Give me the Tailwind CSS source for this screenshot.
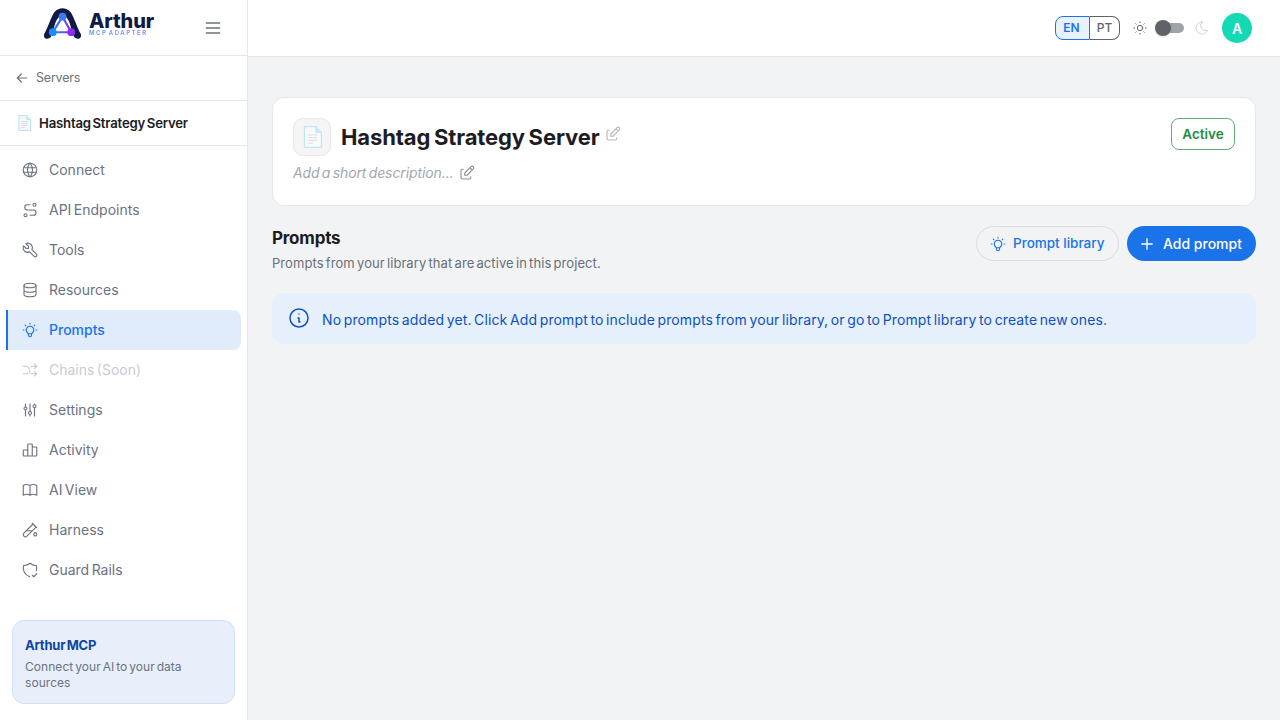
<!DOCTYPE html>
<html lang="en">
<head>
    <meta charset="UTF-8">
    <meta name="viewport" content="width=device-width, initial-scale=1.0">
    <title>Hashtag Strategy Server</title>
    <script src="https://cdn.jsdelivr.net/npm/@tailwindcss/browser@4"></script>
</head>
<body class="h-[720px] w-[1280px] overflow-hidden flex bg-[#f1f3f5] font-['Inter',sans-serif] [word-spacing:-1.5px]">
    <!-- Sidebar -->
    <aside class="w-[248px] h-full shrink-0 bg-white border-r border-[#e5e7eb] flex flex-col">
        <div class="h-[56px] shrink-0 border-b border-[#e5e7eb] flex items-center pl-[43px] pr-[24px] justify-between">
            <div class="flex items-center gap-[7px] -mt-[8px]">
                <svg class="w-[39px] h-[33px]" viewBox="0 0 40 34">
                    <defs>
                        <linearGradient id="tri" x1="0" y1="0" x2="1" y2="0"><stop offset="0" stop-color="#1a8cff"/><stop offset="1" stop-color="#8b2cf5"/></linearGradient>
                    </defs>
                    <path d="M1 28 C5 22 8 10 12 5 C16 0 24 0 28 5 C32 10 35 22 39 28 C40 33 35 34 32 31 L30 26 C28 18 26 9 20 9 C14 9 12 18 10 26 L8 31 C5 34 0 33 1 28Z" fill="#101a45"/>
                    <path d="M20 10 L29 26 H10 Z" fill="#fff" stroke="url(#tri)" stroke-width="2.200"/>
                    <circle cx="20" cy="10" r="4" fill="#3d7cf2"/>
                    <circle cx="10" cy="26" r="4" fill="#1a8cff"/>
                    <circle cx="29" cy="26" r="4" fill="#8b2cf5"/>
                </svg>
                <div class="flex flex-col leading-none">
                    <span class="text-[20px] font-extrabold text-[#101a45] tracking-[-0.1px] leading-[18px]">Arthur</span>
                    <span class="text-[6px] font-semibold tracking-[1.5px] bg-gradient-to-r from-[#3b9bff] to-[#9d6bf5] bg-clip-text text-transparent leading-[6px]">MCP ADAPTER</span>
                </div>
            </div>
            <svg class="w-[20px] h-[20px] text-[#6b7280]" viewBox="0 0 24 24" fill="none" stroke="currentColor" stroke-width="1.700" stroke-linecap="round"><path d="M4 6h16M4 12h16M4 18h16"/></svg>
        </div>
        <div class="h-[45px] shrink-0 border-b border-[#e5e7eb] flex items-center pl-[14px] gap-[6px] text-[12.500px] tracking-[-0.2px] text-[#6b7280]">
            <svg class="w-[16px] h-[16px]" viewBox="0 0 24 24" fill="none" stroke="currentColor" stroke-width="1.800" stroke-linecap="round" stroke-linejoin="round"><path d="M5 12h14M5 12l6 6M5 12l6-6"/></svg>
            <span>Servers</span>
        </div>
        <div class="h-[45px] shrink-0 border-b border-[#e5e7eb] flex items-center pl-[18px] gap-[8px] text-[13.200px] font-semibold text-[#1c1c22] tracking-[-0.2px]">
            <svg class="w-[13px] h-[16px]" viewBox="0 0 14 16" preserveAspectRatio="none"><path d="M1 .5h8.500L13.500 4.500V15.500H1Z" fill="#f5f7f9" stroke="#b5dffa"/><path d="M9.500 .5V4.500H13.500" fill="#d5eefd" stroke="#b5dffa"/><path d="M3.500 6.500h7M3.500 8.500h7M3.500 10.500h7M3.500 12.500h4" stroke="#d8dde2"/></svg>
            <span class="mt-[2px]">Hashtag Strategy Server</span>
        </div>
        <nav class="flex flex-col pt-[4px] pl-[6px] pr-[6px] text-[14px] text-[#6b7280]">
            <a class="h-[40px] flex items-center gap-[10px] pl-[15px]">
                <svg class="w-[18px] h-[18px]" viewBox="0 0 24 24" fill="none" stroke="currentColor" stroke-width="1.500" stroke-linecap="round" stroke-linejoin="round"><circle cx="12" cy="12" r="9"/><path d="M3.600 9h16.800M3.600 15h16.800M11.500 3a17 17 0 0 0 0 18M12.500 3a17 17 0 0 1 0 18"/></svg>
                <span class="-mt-[1px]">Connect</span>
            </a>
            <a class="h-[40px] flex items-center gap-[10px] pl-[15px]">
                <svg class="w-[18px] h-[18px]" viewBox="0 0 24 24" fill="none" stroke="currentColor" stroke-width="1.500" stroke-linecap="round" stroke-linejoin="round"><circle cx="6" cy="19" r="2"/><circle cx="18" cy="5" r="2"/><path d="M12 19h4.500a3.500 3.500 0 0 0 0-7h-8a3.500 3.500 0 0 1 0-7h3.500"/></svg>
                <span class="-mt-[1px]">API Endpoints</span>
            </a>
            <a class="h-[40px] flex items-center gap-[10px] pl-[15px]">
                <svg class="w-[18px] h-[18px]" viewBox="0 0 24 24" fill="none" stroke="currentColor" stroke-width="1.500" stroke-linecap="round" stroke-linejoin="round"><path d="M7 10h3v-3l-3.500-3.500a6 6 0 0 1 8 8l6 6a2 2 0 0 1-3 3l-6-6a6 6 0 0 1-8-8l3.500 3.500"/></svg>
                <span class="-mt-[1px]">Tools</span>
            </a>
            <a class="h-[40px] flex items-center gap-[10px] pl-[15px]">
                <svg class="w-[18px] h-[18px]" viewBox="0 0 24 24" fill="none" stroke="currentColor" stroke-width="1.500" stroke-linecap="round" stroke-linejoin="round"><ellipse cx="12" cy="6" rx="8" ry="3"/><path d="M4 6v6a8 3 0 0 0 16 0v-6M4 12v6a8 3 0 0 0 16 0v-6"/></svg>
                <span class="-mt-[1px]">Resources</span>
            </a>
            <a class="h-[40px] flex items-center gap-[10px] pl-[13px] bg-[#e1ecfb] border-l-2 border-[#1a73e8] rounded-r-[8px] text-[#1a73e8] font-medium">
                <svg class="w-[18px] h-[18px]" viewBox="0 0 24 24" fill="none" stroke="currentColor" stroke-width="1.500" stroke-linecap="round" stroke-linejoin="round"><path d="M3 12h1m8-9v1m8 8h1m-15.400-6.400l.7.7m12.100-.7l-.7.7"/><path d="M9 16a5 5 0 1 1 6 0a3.500 3.500 0 0 0-1 3a2 2 0 0 1-4 0a3.500 3.500 0 0 0-1-3M9.700 17h4.600"/></svg>
                <span class="-mt-[1px]">Prompts</span>
            </a>
            <a class="h-[40px] flex items-center gap-[10px] pl-[15px] text-[#c8ccd2]">
                <svg class="w-[18px] h-[18px]" viewBox="0 0 24 24" fill="none" stroke="currentColor" stroke-width="1.500" stroke-linecap="round" stroke-linejoin="round"><path d="M18 4l3 3l-3 3M18 20l3-3l-3-3M3 7h3a5 5 0 0 1 5 5a5 5 0 0 0 5 5h5M21 7h-5a4.980 4.980 0 0 0-3 1m-4 8a4.980 4.980 0 0 1-3 1h-3"/></svg>
                <span class="-mt-[1px]">Chains (Soon)</span>
            </a>
            <a class="h-[40px] flex items-center gap-[10px] pl-[15px]">
                <svg class="w-[18px] h-[18px]" viewBox="0 0 24 24" fill="none" stroke="currentColor" stroke-width="1.500" stroke-linecap="round" stroke-linejoin="round"><path d="M4 10a2 2 0 1 0 4 0a2 2 0 0 0-4 0M6 4v4M6 12v8M10 16a2 2 0 1 0 4 0a2 2 0 0 0-4 0M12 4v10M12 18v2M16 7a2 2 0 1 0 4 0a2 2 0 0 0-4 0M18 4v1M18 9v11"/></svg>
                <span class="-mt-[1px]">Settings</span>
            </a>
            <a class="h-[40px] flex items-center gap-[10px] pl-[15px]">
                <svg class="w-[18px] h-[18px]" viewBox="0 0 24 24" fill="none" stroke="currentColor" stroke-width="1.500" stroke-linecap="round" stroke-linejoin="round"><path d="M3 13a1 1 0 0 1 1-1h4a1 1 0 0 1 1 1v6a1 1 0 0 1-1 1h-4a1 1 0 0 1-1-1zM15 9a1 1 0 0 1 1-1h4a1 1 0 0 1 1 1v10a1 1 0 0 1-1 1h-4a1 1 0 0 1-1-1zM9 5a1 1 0 0 1 1-1h4a1 1 0 0 1 1 1v14a1 1 0 0 1-1 1h-4a1 1 0 0 1-1-1zM4 20h16"/></svg>
                <span class="-mt-[1px]">Activity</span>
            </a>
            <a class="h-[40px] flex items-center gap-[10px] pl-[15px]">
                <svg class="w-[18px] h-[18px]" viewBox="0 0 24 24" fill="none" stroke="currentColor" stroke-width="1.500" stroke-linecap="round" stroke-linejoin="round"><path d="M3 19a9 9 0 0 1 9 0a9 9 0 0 1 9 0M3 6a9 9 0 0 1 9 0a9 9 0 0 1 9 0M3 6v13M12 6v13M21 6v13"/></svg>
                <span class="-mt-[1px]">AI View</span>
            </a>
            <a class="h-[40px] flex items-center gap-[10px] pl-[15px]">
                <svg class="w-[18px] h-[18px]" viewBox="0 0 24 24" fill="none" stroke="currentColor" stroke-width="1.500" stroke-linecap="round" stroke-linejoin="round"><path d="M20 8.040l-12.122 12.124a2.857 2.857 0 1 1-4.041-4.040l12.122-12.124M7 13h8M19 15l1.500 1.600a2 2 0 1 1-3 0l1.500-1.600zM15 3l6 6"/></svg>
                <span class="-mt-[1px]">Harness</span>
            </a>
            <a class="h-[40px] flex items-center gap-[10px] pl-[15px]">
                <svg class="w-[18px] h-[18px]" viewBox="0 0 24 24" fill="none" stroke="currentColor" stroke-width="1.500" stroke-linecap="round" stroke-linejoin="round"><path d="M11.460 20.846a12 12 0 0 1-7.960-14.846a12 12 0 0 0 8.500-3a12 12 0 0 0 8.500 3a12 12 0 0 1-.09 7.060M15 19l2 2l4-4"/></svg>
                <span class="-mt-[1px]">Guard Rails</span>
            </a>
        </nav>
        <div class="mt-auto mx-[12px] mb-[16px] h-[84px] rounded-[12px] bg-[#e8effb] border border-[#cfdff7] px-[12px] pt-[15px]">
            <div class="text-[13px] font-bold text-[#0d47a1] tracking-[-0.2px] leading-[18px]">Arthur MCP</div>
            <div class="text-[12px] text-[#6b7280] leading-[16px] mt-[5px] tracking-[0.05px]">Connect your AI to your data sources</div>
        </div>
    </aside>

    <!-- Main -->
    <div class="flex-1 flex flex-col min-w-0">
        <header class="h-[57px] shrink-0 bg-white border-b border-[#e5e7eb] flex items-center justify-end pr-[28px]">
            <div class="flex h-[24px] text-[12px] font-semibold">
                <span class="w-[35px] pr-[2px] flex items-center justify-center rounded-l-[8px] border border-[#1a73e8] bg-[#e8f1fd] text-[#1a73e8]">EN</span>
                <span class="w-[30px] flex items-center justify-center rounded-r-[8px] border border-l-0 border-[#5f6368] text-[#5f6368] font-medium">PT</span>
            </div>
            <svg class="w-[16px] h-[16px] ml-[12px] text-[#5f6368]" viewBox="0 0 24 24" fill="none" stroke="currentColor" stroke-width="1.500" stroke-linecap="round"><circle cx="12" cy="12" r="4"/><path d="M3 12h1m8-9v1m8 8h1m-9 8v1m-6.400-15.400l.7.7m12.100-.7l-.7.7m0 11.400l.7.7m-12.100-.7l-.7.7"/></svg>
            <div class="relative w-[28px] h-[10px] ml-[8px] rounded-full bg-[#a0a3a8]">
                <div class="absolute -left-[1px] -top-[3px] w-[16px] h-[16px] rounded-full bg-[#5f6368] shadow-sm"></div>
            </div>
            <svg class="w-[16px] h-[16px] ml-[10px] text-[#cfd2d6]" viewBox="0 0 24 24" fill="none" stroke="currentColor" stroke-width="1.500" stroke-linecap="round" stroke-linejoin="round"><path d="M12 3c.132 0 .263 0 .393 0a7.500 7.500 0 0 0 7.920 12.446a9 9 0 1 1-8.313-12.454z"/></svg>
            <div class="w-[30px] h-[30px] ml-[12px] rounded-full bg-[#14d9b5] text-white text-[14px] font-semibold flex items-center justify-center">A</div>
        </header>

        <main class="flex-1 px-[24px] pt-[40px]">
            <section class="h-[109px] bg-white border border-[#e5e7eb] rounded-[12px] pl-[20px] pr-[20px] pt-[20px] flex justify-between">
                <div>
                    <div class="flex items-center gap-[10px]">
                        <div class="w-[38px] h-[38px] rounded-[10px] bg-[#f5f5f6] border border-[#e5e7eb] flex items-center justify-center">
                            <svg class="w-[19px] h-[22px]" viewBox="0 0 14 16" preserveAspectRatio="none"><path d="M1 .5h8.500L13.500 4.500V15.500H1Z" fill="#f8fafb" stroke="#b5dffa" stroke-width=".7"/><path d="M9.500 .5V4.500H13.500" fill="#cdeafc" stroke="#b5dffa" stroke-width=".7"/><path d="M3.500 6.500h7M3.500 8.500h7M3.500 10.500h7M3.500 12.500h4" stroke="#d8dde2" stroke-width=".7"/></svg>
                        </div>
                        <h1 class="text-[22px] font-bold text-[#1c1c22] tracking-[-0.11px]">Hashtag Strategy Server</h1>
                        <svg class="w-[18px] h-[18px] -ml-[6px] -mt-[6px] text-[#b4b7bc]" viewBox="0 0 24 24" fill="none" stroke="currentColor" stroke-width="1.500" stroke-linecap="round" stroke-linejoin="round"><path d="M7 7h-1a2 2 0 0 0-2 2v9a2 2 0 0 0 2 2h9a2 2 0 0 0 2-2v-1M20.385 6.585a2.100 2.100 0 0 0-2.970-2.970l-8.415 8.385v3h3l8.385-8.415zM16 5l3 3"/></svg>
                    </div>
                    <div class="flex items-center gap-[4px] mt-[6px] text-[14px] italic text-[#a3a7ad] tracking-[-0.1px]">
                        <span>Add a short description...</span>
                        <svg class="w-[18px] h-[18px] text-[#8b8f95]" viewBox="0 0 24 24" fill="none" stroke="currentColor" stroke-width="1.500" stroke-linecap="round" stroke-linejoin="round"><path d="M7 7h-1a2 2 0 0 0-2 2v9a2 2 0 0 0 2 2h9a2 2 0 0 0 2-2v-1M20.385 6.585a2.100 2.100 0 0 0-2.970-2.970l-8.415 8.385v3h3l8.385-8.415zM16 5l3 3"/></svg>
                    </div>
                </div>
                <div class="h-[32px] w-[64px] rounded-[8px] border border-[#5fae78] text-[#1e8e3e] text-[13.500px] font-semibold flex items-center justify-center">Active</div>
            </section>

            <div class="flex justify-between mt-[20px]">
                <div>
                    <h2 class="text-[17px] font-bold text-[#1c1c22] leading-[24px] tracking-[-0.2px]">Prompts</h2>
                    <p class="text-[13px] text-[#6b7076] leading-[20px] mt-[3px] tracking-[0.07px]">Prompts from your library that are active in this project.</p>
                </div>
                <div class="flex gap-[8px] h-[35px]">
                    <button class="w-[143px] rounded-full border border-[#d9dce0] text-[#1a73e8] text-[13.500px] font-medium flex items-center pl-[12px] gap-[6px]">
                        <svg class="w-[18px] h-[18px]" viewBox="0 0 24 24" fill="none" stroke="currentColor" stroke-width="1.500" stroke-linecap="round" stroke-linejoin="round"><path d="M3 12h1m8-9v1m8 8h1m-15.400-6.400l.7.7m12.100-.7l-.7.7"/><path d="M9 16a5 5 0 1 1 6 0a3.500 3.500 0 0 0-1 3a2 2 0 0 1-4 0a3.500 3.500 0 0 0-1-3M9.700 17h4.600"/></svg>
                        <span>Prompt library</span>
                    </button>
                    <button class="w-[129px] rounded-full bg-[#1a73e8] text-white text-[14px] font-medium flex items-center pl-[11px] gap-[7px]">
                        <svg class="w-[18px] h-[18px]" viewBox="0 0 24 24" fill="none" stroke="currentColor" stroke-width="1.800" stroke-linecap="round"><path d="M12 5v14M5 12h14"/></svg>
                        <span>Add prompt</span>
                    </button>
                </div>
            </div>

            <div class="h-[51px] mt-[20px] rounded-[12px] bg-[#e6effc] flex items-center pl-[15px] gap-[11px] text-[14px] text-[#0d52bf] tracking-[0.12px]">
                <svg class="w-[24px] h-[24px] -mt-[2px]" viewBox="0 0 24 24" fill="none" stroke="currentColor" stroke-width="1.500" stroke-linecap="round" stroke-linejoin="round"><path d="M3 12a9 9 0 1 0 18 0a9 9 0 0 0-18 0M12 8h.01M11 12h1v4h1"/></svg>
                <span class="mt-[2px]">No prompts added yet. Click Add prompt to include prompts from your library, or go to Prompt library to create new ones.</span>
            </div>
        </main>
    </div>
</body>
</html>
